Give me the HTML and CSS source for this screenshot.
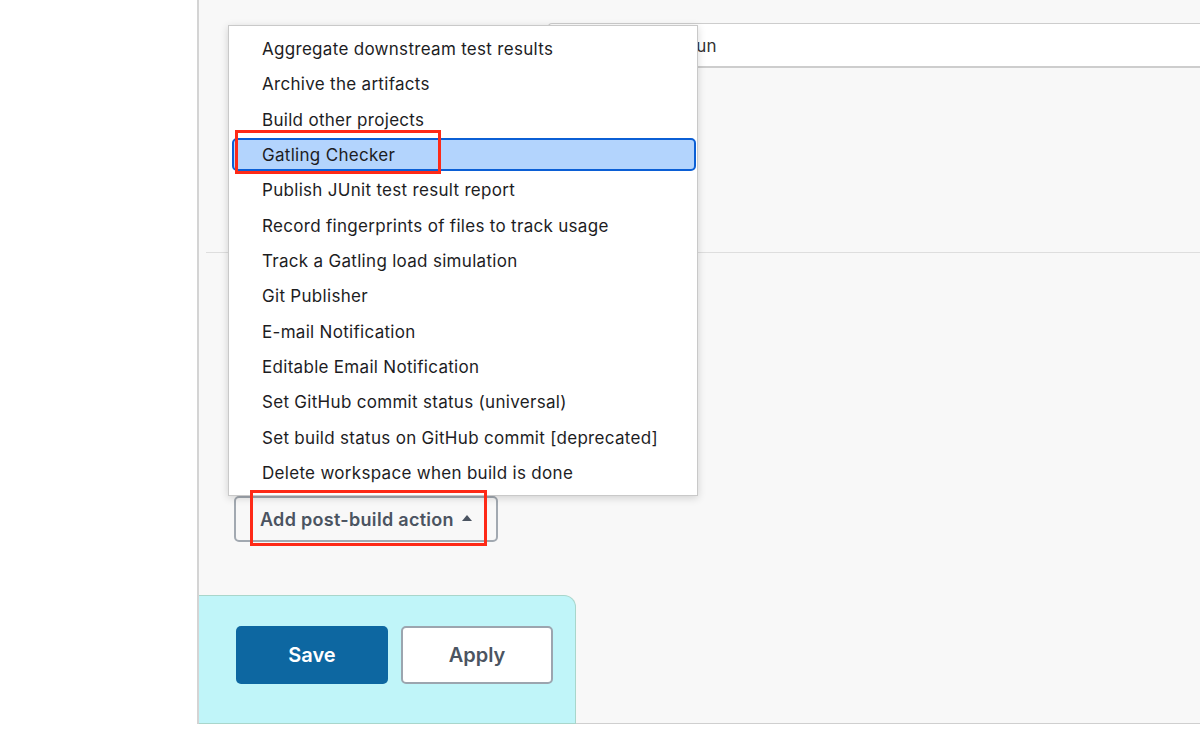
FILE: index.html
```html
<!DOCTYPE html>
<html lang="en">
<head>
  <meta charset="UTF-8">
  <meta name="viewport" content="width=device-width, initial-scale=1.0">
  <title>Configure - Post-build Actions</title>
  <link rel="stylesheet" href="styles.css">
</head>
<body>
  <div class="panel">
    <div class="field-row">
      <div class="text-input">Run</div>
    </div>

    <div class="divider"></div>

    <div class="post-build">
      <button class="add-btn" type="button">Add post-build action <span class="caret"></span></button>
      <span class="mark mark-btn"></span>

      <ul class="menu">
        <li class="item">Aggregate downstream test results</li>
        <li class="item">Archive the artifacts</li>
        <li class="item">Build other projects</li>
        <li class="item active">Gatling Checker</li>
        <li class="item">Publish JUnit test result report</li>
        <li class="item">Record fingerprints of files to track usage</li>
        <li class="item">Track a Gatling load simulation</li>
        <li class="item">Git Publisher</li>
        <li class="item">E-mail Notification</li>
        <li class="item">Editable Email Notification</li>
        <li class="item">Set GitHub commit status (universal)</li>
        <li class="item">Set build status on GitHub commit [deprecated]</li>
        <li class="item">Delete workspace when build is done</li>
      </ul>
      <span class="mark mark-item"></span>
    </div>

    <div class="bottom-bar">
      <button class="btn btn-save" type="button">Save</button>
      <button class="btn btn-apply" type="button">Apply</button>
    </div>
  </div>
</body>
</html>
```

FILE: styles.css
```css
body {
  margin: 0;
  background: #fff;
  font-family: 'Inter', 'Liberation Sans', sans-serif;
  color: #1d1d1f;
}
.panel {
  margin-left: 197px;
  height: 724px;
  box-sizing: border-box;
  background: #f8f8f8;
  border-left: 2px solid #d4d4d4;
  border-bottom: 1px solid #cfcfcf;
  padding-top: 23px;
  position: relative;
}
.field-row {
  padding-left: 349px;
}
.text-input {
  height: 45px;
  box-sizing: border-box;
  background: #fff;
  border: 1px solid #cdcdcd;
  border-bottom-width: 2px;
  border-right: none;
  border-radius: 4px 0 0 4px;
  padding-left: 136px;
  font-size: 17px;
  letter-spacing: 0.3px;
  line-height: 44px;
  color: #333;
}
.divider {
  margin: 184px 0 0 7px;
  border-top: 1px solid #dedede;
}
.post-build {
  margin: 243px 0 0 35px;
  position: relative;
  height: 98px;
}
.add-btn {
  height: 46px;
  padding: 0 24px 0 24px;
  background: #f8f8f8;
  border: 2px solid #a2a9b1;
  border-radius: 5px;
  font-family: inherit;
  font-size: 18px;
  letter-spacing: 0.3px;
  font-weight: 600;
  color: #4b5461;
  display: flex;
  align-items: center;
  gap: 8px;
}
.caret {
  width: 0;
  height: 0;
  border-left: 5.5px solid transparent;
  border-right: 5.5px solid transparent;
  border-bottom: 6px solid #4b5461;
  margin-top: -2px;
}
.mark {
  position: absolute;
  z-index: 2;
  border: 3px solid #fe2a17;
  box-sizing: border-box;
}
.mark-btn {
  left: 16px;
  top: -6px;
  width: 237px;
  height: 56px;
}
.menu {
  position: absolute;
  z-index: 1;
  left: -6px;
  top: -471px;
  width: 468px;
  margin: 0;
  padding: 5px 0;
  list-style: none;
  background: #fff;
  border: 1px solid #c9c9c9;
  box-shadow: 0 2px 8px rgba(0, 0, 0, 0.16);
  font-size: 17px;
  letter-spacing: 0.3px;
}
.item {
  height: 35.35px;
  line-height: 37px;
  padding-left: 33px;
  white-space: nowrap;
}
.item.active {
  margin: 1px 1px 1.35px 3px;
  height: 33px;
  line-height: 30px;
  box-sizing: border-box;
  background: #b3d4fd;
  border: 2px solid #0b5fd5;
  border-radius: 5px;
  padding-left: 28px;
}
.mark-item {
  left: 1px;
  top: -366px;
  width: 206px;
  height: 44px;
}
.bottom-bar {
  position: absolute;
  left: 0;
  bottom: -1px;
  width: 377px;
  height: 129px;
  box-sizing: border-box;
  background: #c0f5f9;
  border: 1px solid #a9d6cb;
  border-left: none;
  border-radius: 0 12px 0 0;
  padding: 30px 0 0 37px;
  display: flex;
  gap: 13px;
  align-items: flex-start;
}
.btn {
  width: 152px;
  height: 58px;
  border-radius: 5px;
  font-family: inherit;
  font-size: 20px;
  font-weight: 600;
}
.btn-save {
  background: #0d67a1;
  border: none;
  color: #fff;
}
.btn-apply {
  background: #fff;
  border: 2px solid #9ca5af;
  color: #4b5461;
}
```
